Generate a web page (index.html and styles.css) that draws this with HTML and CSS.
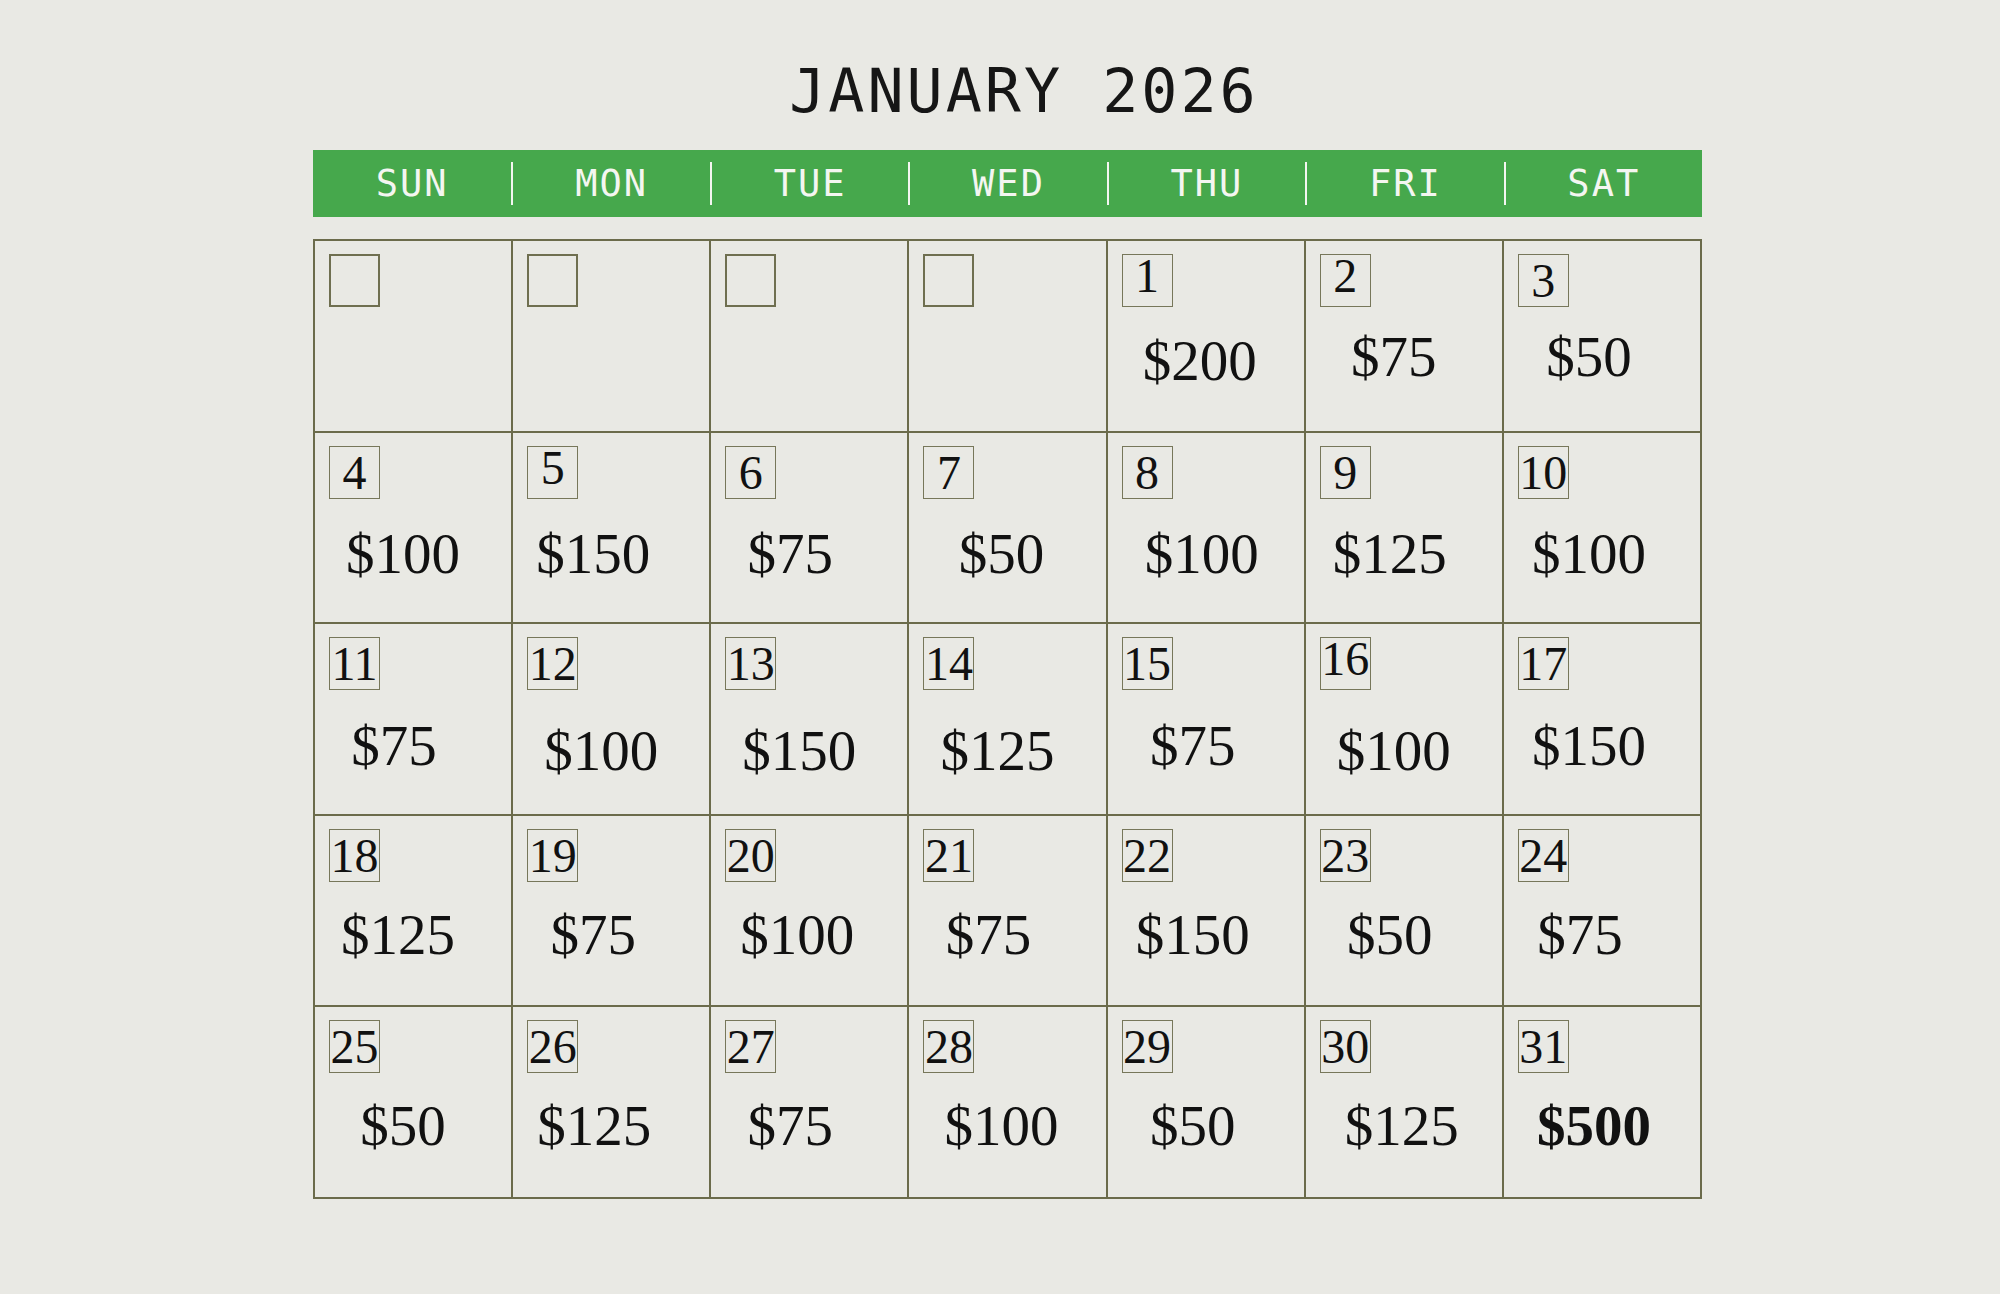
FILE: index.html
```html
<!DOCTYPE html>
<html lang="en">
<head>
<meta charset="utf-8">
<title>January 2026</title>
<link rel="stylesheet" href="styles.css">
</head>
<body>
<div class="page">
  <h1 class="title">JANUARY 2026</h1>
  <div class="weekdays">
    <div class="wd">SUN</div>
    <div class="wd">MON</div>
    <div class="wd">TUE</div>
    <div class="wd">WED</div>
    <div class="wd">THU</div>
    <div class="wd">FRI</div>
    <div class="wd">SAT</div>
  </div>
  <div class="grid">
    <div class="cell"><span class="num empty"></span></div>
    <div class="cell"><span class="num empty"></span></div>
    <div class="cell"><span class="num empty"></span></div>
    <div class="cell"><span class="num empty"></span></div>
    <div class="cell"><span class="num"><span class="d" style="--ny:-5px">1</span></span><div class="amt" style="--dx:-6px;--dy:0px">$200</div></div>
    <div class="cell"><span class="num"><span class="d" style="--ny:-5px">2</span></span><div class="amt" style="--dx:-10px;--dy:-4px">$75</div></div>
    <div class="cell"><span class="num"><span class="d">3</span></span><div class="amt" style="--dx:-13px;--dy:-4px">$50</div></div>

    <div class="cell"><span class="num"><span class="d">4</span></span><div class="amt" style="--dx:-10px;--dy:1px">$100</div></div>
    <div class="cell"><span class="num"><span class="d" style="--ny:-5px">5</span></span><div class="amt" style="--dx:-18px;--dy:1px">$150</div></div>
    <div class="cell"><span class="num"><span class="d">6</span></span><div class="amt" style="--dx:-19px;--dy:1px">$75</div></div>
    <div class="cell"><span class="num"><span class="d">7</span></span><div class="amt" style="--dx:-6px;--dy:1px">$50</div></div>
    <div class="cell"><span class="num"><span class="d">8</span></span><div class="amt" style="--dx:-4px;--dy:1px">$100</div></div>
    <div class="cell"><span class="num"><span class="d">9</span></span><div class="amt" style="--dx:-14px;--dy:1px">$125</div></div>
    <div class="cell"><span class="num"><span class="d">10</span></span><div class="amt" style="--dx:-13px;--dy:1px">$100</div></div>

    <div class="cell"><span class="num"><span class="d">11</span></span><div class="amt" style="--dx:-19px;--dy:2px">$75</div></div>
    <div class="cell"><span class="num"><span class="d">12</span></span><div class="amt" style="--dx:-10px;--dy:7px">$100</div></div>
    <div class="cell"><span class="num"><span class="d">13</span></span><div class="amt" style="--dx:-10px;--dy:7px">$150</div></div>
    <div class="cell"><span class="num"><span class="d">14</span></span><div class="amt" style="--dx:-10px;--dy:7px">$125</div></div>
    <div class="cell"><span class="num"><span class="d">15</span></span><div class="amt" style="--dx:-13px;--dy:2px">$75</div></div>
    <div class="cell"><span class="num"><span class="d" style="--ny:-5px">16</span></span><div class="amt" style="--dx:-10px;--dy:7px">$100</div></div>
    <div class="cell"><span class="num"><span class="d">17</span></span><div class="amt" style="--dx:-13px;--dy:2px">$150</div></div>

    <div class="cell"><span class="num"><span class="d">18</span></span><div class="amt" style="--dx:-15px;--dy:-1px">$125</div></div>
    <div class="cell"><span class="num"><span class="d">19</span></span><div class="amt" style="--dx:-18px;--dy:-1px">$75</div></div>
    <div class="cell"><span class="num"><span class="d">20</span></span><div class="amt" style="--dx:-12px;--dy:-1px">$100</div></div>
    <div class="cell"><span class="num"><span class="d">21</span></span><div class="amt" style="--dx:-19px;--dy:-1px">$75</div></div>
    <div class="cell"><span class="num"><span class="d">22</span></span><div class="amt" style="--dx:-13px;--dy:-1px">$150</div></div>
    <div class="cell"><span class="num"><span class="d">23</span></span><div class="amt" style="--dx:-14px;--dy:-1px">$50</div></div>
    <div class="cell"><span class="num"><span class="d">24</span></span><div class="amt" style="--dx:-22px;--dy:-1px">$75</div></div>

    <div class="cell"><span class="num"><span class="d">25</span></span><div class="amt" style="--dx:-10px;--dy:-1px">$50</div></div>
    <div class="cell"><span class="num"><span class="d">26</span></span><div class="amt" style="--dx:-17px;--dy:-1px">$125</div></div>
    <div class="cell"><span class="num"><span class="d">27</span></span><div class="amt" style="--dx:-19px;--dy:-1px">$75</div></div>
    <div class="cell"><span class="num"><span class="d">28</span></span><div class="amt" style="--dx:-6px;--dy:-1px">$100</div></div>
    <div class="cell"><span class="num"><span class="d">29</span></span><div class="amt" style="--dx:-13px;--dy:-1px">$50</div></div>
    <div class="cell"><span class="num"><span class="d">30</span></span><div class="amt" style="--dx:-2px;--dy:-1px">$125</div></div>
    <div class="cell"><span class="num"><span class="d">31</span></span><div class="amt big" style="--dx:-8px;--dy:-1px">$500</div></div>
  </div>
</div>
</body>
</html>
```
FILE: styles.css
```css
html, body {
  margin: 0;
  padding: 0;
  background: #e9e9e4;
}

.page {
  width: 1389px;
  margin-left: 313px;
}

.title {
  margin: 56px 0 0;
  padding-left: 33px;
  text-align: center;
  font-family: "DejaVu Sans Mono", monospace;
  font-weight: 400;
  font-size: 60px;
  line-height: 70px;
  letter-spacing: 3px;
  color: #161616;
}

.weekdays {
  margin-top: 24px;
  height: 67px;
  background: #46a84c;
  display: grid;
  grid-template-columns: repeat(7, 1fr);
  align-items: center;
}

.wd {
  height: 43px;
  line-height: 43px;
  text-align: center;
  color: #f4f6f1;
  font-family: "DejaVu Sans Mono", monospace;
  font-size: 37px;
  letter-spacing: 2px;
}

.wd + .wd {
  border-left: 2px solid #f4f6f1;
}

.grid {
  margin-top: 22px;
  display: grid;
  grid-template-columns: repeat(7, 1fr);
  grid-auto-rows: 191.6px;
  border-top: 2px solid #6b6b4b;
  border-left: 2px solid #6b6b4b;
}

.cell {
  box-sizing: border-box;
  border-right: 2px solid #6b6b4b;
  border-bottom: 2px solid #6b6b4b;
  padding: 13px 0 0 14px;
  min-width: 0;
}

.num {
  display: inline-block;
  box-sizing: border-box;
  min-width: 51px;
  height: 53px;
  border: 1px solid #77775a;
  text-align: center;
  font-family: "Liberation Serif", serif;
  font-size: 48px;
  line-height: 51px;
  color: #111111;
  vertical-align: top;
}

.num.empty {
  border: 2px solid #6f6f50;
}

.d {
  display: inline-block;
  transform: translateY(var(--ny, 0px));
}

.amt {
  margin: 22px 0 0 -14px;
  text-align: center;
  font-family: "Liberation Serif", serif;
  font-size: 57px;
  line-height: 64px;
  color: #111111;
  transform: translate(var(--dx, 0px), var(--dy, 0px));
}

.amt.big {
  font-weight: 700;
}
```
